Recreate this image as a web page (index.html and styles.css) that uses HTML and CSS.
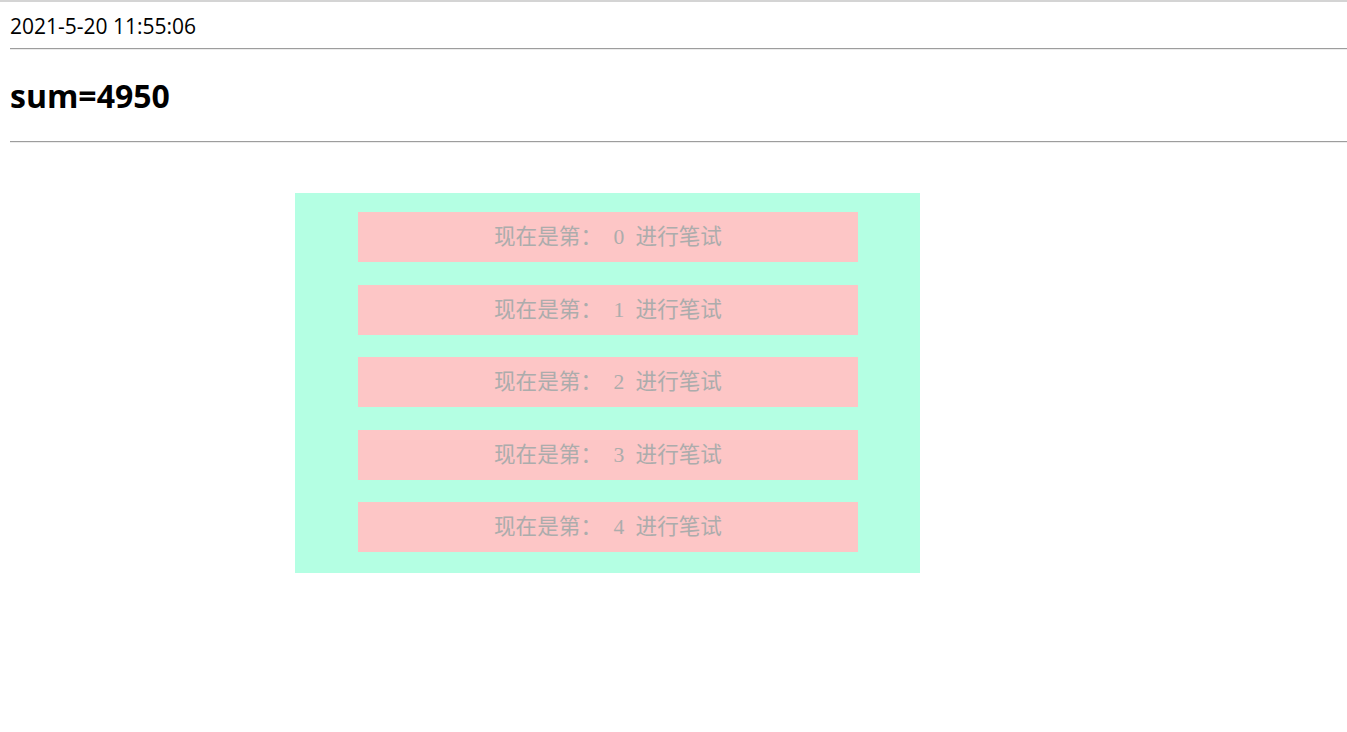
FILE: index.html
```html
<!DOCTYPE html>
<html lang="zh">
<head>
<meta charset="utf-8">
<title>sum</title>
<link rel="stylesheet" href="styles.css">
</head>
<body>
<div class="topline"></div>
<main class="page">
  <div class="time">2021-5-20 11:55:06</div>
  <hr class="rule">
  <h2 class="sum">sum=4950</h2>
  <hr class="rule">
  <section class="panel">
    <div class="item">现在是第： 0 进行笔试</div>
    <div class="item">现在是第： 1 进行笔试</div>
    <div class="item">现在是第： 2 进行笔试</div>
    <div class="item">现在是第： 3 进行笔试</div>
    <div class="item">现在是第： 4 进行笔试</div>
  </section>
</main>
</body>
</html>
```

FILE: styles.css
```css
html, body {
  margin: 0;
  padding: 0;
  background: #ffffff;
}

.topline {
  height: 2px;
  background: #d4d4d4;
}

.page {
  padding-left: 10px;
  font-family: "Open Sans", "Noto Sans", "Noto Sans CJK SC", sans-serif;
  color: #000;
}

.time {
  margin-top: 10px;
  font-size: 21px;
  line-height: 28px;
}

.rule {
  margin: 0;
  height: 0;
  border: none;
  border-top: 1px solid #9d9d9d;
  border-bottom: 1px solid #ececec;
}

.time + .rule {
  margin-top: 8px;
}

.sum {
  margin: 24px 0 23px;
  font-size: 32px;
  font-weight: 700;
  line-height: 44px;
}

.panel {
  margin: 50px 0 0 285px;
  width: 625px;
  height: 380px;
  box-sizing: border-box;
  padding-top: 19px;
  background: #b4ffe3;
  display: flex;
  flex-direction: column;
  align-items: center;
  gap: 22.5px;
}

.item {
  width: 500px;
  height: 50px;
  margin-left: 1px;
  background: #fdc6c6;
  color: #acacac;
  font-family: "Liberation Serif", "Noto Sans CJK SC", serif;
  font-size: 21.6px;
  line-height: 50px;
  word-spacing: 6px;
  text-align: center;
}
```
